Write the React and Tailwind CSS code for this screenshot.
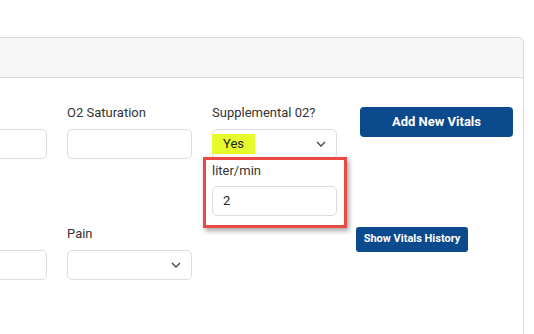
const Chevron = () => (
  <svg width="10" height="6" viewBox="0 0 10 6" fill="none" stroke="#444" strokeWidth="1.3">
    <path d="M1 1l4 4 4-4" />
  </svg>
);

const Field = ({ label, children }) => (
  <div className="flex flex-col">
    <label className="h-[18px] text-[13px] leading-[18px] text-[#333] mb-[7px] whitespace-nowrap">
      {label}
    </label>
    {children}
  </div>
);

const Input = ({ value }) => (
  <div className="h-[30px] border border-[#dcdce0] rounded-[5px] bg-white flex items-center px-[10px] text-[13px] text-[#222]">
    {value}
  </div>
);

const Select = ({ children }) => (
  <div className="h-[30px] border border-[#dcdce0] rounded-[5px] bg-white flex items-center justify-between pr-[10px] text-[13px] text-[#222]">
    <div className="flex items-center">{children}</div>
    <Chevron />
  </div>
);

export default function App() {
  return (
    <div
      className="w-[534px] h-[334px] bg-white overflow-hidden pt-[37px] pr-[10px]"
      style={{ fontFamily: "Roboto, 'Liberation Sans', sans-serif" }}
    >
      <div className="h-[320px] border-t border-r border-[#d8d8d8] rounded-tr-[6px] bg-white">
        <div className="h-[40px] bg-[#f7f7f7] border-b border-[#d8d8d8] rounded-tr-[6px]" />
        {/* first column is scrolled off to the left */}
        <div className="ml-[-78px] pt-[26px] grid grid-cols-[125px_125px_125px_157px] gap-x-5 gap-y-[9px] items-start">
          <Field label="">
            <Input />
          </Field>
          <Field label="O2 Saturation">
            <Input />
          </Field>
          <div className="flex flex-col">
            <Field label="Supplemental 02?">
              <Select>
                <span className="ml-[-1px] h-[20px] px-[11px] bg-[#e6fb2c] flex items-center">Yes</span>
              </Select>
            </Field>
            <div className="relative pt-[3px]">
              <div className="absolute left-[-9px] right-[-10px] top-[-2px] bottom-[-12px] border-[3px] border-[#ea4a45] shadow-[2px_3px_5px_rgba(0,0,0,0.35)]" />
              <div className="text-[13px] leading-[17px] text-[#333] mb-[7px]">liter/min</div>
              <Input value="2" />
            </div>
          </div>
          <div className="pl-[3px] pt-[3px]">
            <button className="w-[153px] h-[30px] rounded-[4px] bg-[#0b4a8c] text-white text-[13px] font-bold">
              Add New Vitals
            </button>
          </div>

          <Field label="">
            <Input />
          </Field>
          <Field label="Pain">
            <Select />
          </Field>
          <div />
          <div className="ml-[-1px]">
            <button className="w-[112px] h-[25px] rounded-[3px] bg-[#0b4a8c] text-white text-[11px] font-bold">
              Show Vitals History
            </button>
          </div>
        </div>
      </div>
    </div>
  );
}
